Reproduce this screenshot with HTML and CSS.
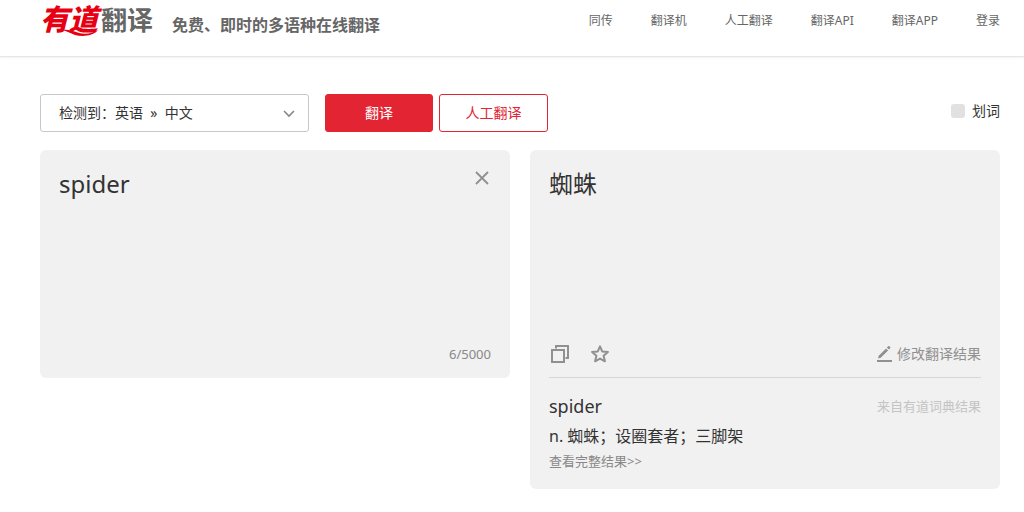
FILE: index.html
```html
<!DOCTYPE html>
<html lang="zh-CN">
<head>
<meta charset="utf-8">
<meta name="viewport" content="width=device-width, initial-scale=1">
<title>有道翻译</title>
<link rel="stylesheet" href="styles.css">
</head>
<body>
<header class="header">
  <h1 class="logo">
    <span class="logo-mark">有道<svg class="logo-swoosh" viewBox="0 0 60 14" aria-hidden="true"><path d="M22 6C28 5 33 7 39 9C46 11 53 9 58 6C53 12 43 13 35 11C30 9 27 7 22 6Z"/></svg></span>
    <span class="logo-name">翻译</span>
  </h1>
  <p class="tagline">免费、即时的多语种在线翻译</p>
  <nav class="nav">
    <a href="#">同传</a>
    <a href="#">翻译机</a>
    <a href="#">人工翻译</a>
    <a href="#">翻译API</a>
    <a href="#">翻译APP</a>
    <a href="#">登录</a>
  </nav>
</header>
<main class="main">
  <form class="toolbar">
    <div class="language">
      <select class="language-select" aria-label="翻译语言">
        <option>检测到：英语&nbsp; »&nbsp; 中文</option>
      </select>
      <svg class="language-arrow" viewBox="0 0 12 8" aria-hidden="true"><path d="M1 1L6 6L11 1"/></svg>
    </div>
    <div class="actions">
      <button class="button button-primary" type="button">翻译</button>
      <button class="button" type="button">人工翻译</button>
    </div>
    <label class="pick"><input class="pick-box" type="checkbox">划词</label>
  </form>
  <div class="panels">
    <section class="panel source">
      <div class="source-row">
        <textarea class="source-text" aria-label="原文" spellcheck="false">spider</textarea>
        <button class="icon-button" type="button" aria-label="清空">
          <svg class="icon-close" viewBox="0 0 14 14"><path d="M1 1L13 13M13 1L1 13"/></svg>
        </button>
      </div>
      <p class="counter">6/5000</p>
    </section>
    <section class="panel">
      <p class="result">蜘蛛</p>
      <div class="tools">
        <button class="icon-button" type="button" aria-label="复制">
          <svg class="icon" viewBox="0 0 18 18"><path d="M1 5H13V17H1ZM5 3.5V1H17V13H14.5"/></svg>
        </button>
        <button class="icon-button" type="button" aria-label="收藏">
          <svg class="icon icon-star" viewBox="0 0 18 18"><path d="M9 1.4L11.2 6.4L16.9 6.9L12.6 10.7L13.9 16.3L9 13.6L4.1 16.3L5.4 10.7L1.1 6.9L6.8 6.4Z"/></svg>
        </button>
        <button class="icon-button edit" type="button">
          <svg class="icon-pen" viewBox="0 0 16 18"><path d="M0 15H15V17H0ZM1 13.5L1.7 10.8L9.1 3.4L11.1 5.4L3.7 12.8ZM9.9 2.6L11.2 1.3Q11.9 .8 12.5 1.3L13.2 2Q13.7 2.6 13.2 3.3L11.9 4.6Z"/></svg>
          修改翻译结果
        </button>
      </div>
      <div class="dictionary">
        <div class="entry">
          <h2 class="word">spider</h2>
          <span class="origin">来自有道词典结果</span>
        </div>
        <p class="meaning">n. 蜘蛛；设圈套者；三脚架</p>
        <a class="more" href="#">查看完整结果&gt;&gt;</a>
      </div>
    </section>
  </div>
</main>
</body>
</html>
```
FILE: styles.css
```css
* {
  box-sizing: border-box;
}

body {
  margin: 0;
  background: #fff;
  color: #333;
  font: 14px/20px "Noto Sans", "Noto Sans CJK SC", sans-serif;
}

h1, h2, p {
  margin: 0;
  font-weight: 400;
}

a {
  color: inherit;
  text-decoration: none;
}

button, select, textarea {
  margin: 0;
  padding: 0;
  border: 0;
  background: none;
  color: inherit;
  font: inherit;
}

.header {
  display: flex;
  align-items: flex-start;
  height: 57px;
  padding: 0 24px 0 40px;
  border-bottom: 1px solid #e6e6e6;
  box-shadow: 0 1px 2px #f2f2f2;
}

.logo {
  display: flex;
  gap: 3px;
  line-height: 40px;
}

.logo-mark {
  position: relative;
  color: #e60012;
  font-size: 29px;
  font-style: italic;
  font-weight: 900;
  line-height: 38px;
}

.logo-swoosh {
  position: absolute;
  left: 0;
  bottom: 2px;
  width: 60px;
  height: 14px;
  fill: #e60012;
}

.logo-name {
  color: #666;
  font-size: 26px;
  font-weight: 600;
}

.tagline {
  margin-left: 19px;
  padding-top: 15px;
  color: #666;
  font-size: 16px;
  font-weight: 600;
}

.nav {
  display: flex;
  gap: 38px;
  margin-left: auto;
  padding-top: 11px;
  color: #666;
  font-size: 12px;
}

.main {
  padding: 37px 24px 23px 40px;
}

.toolbar {
  display: flex;
  align-items: center;
  gap: 16px;
}

.language {
  position: relative;
  width: 269px;
}

.language-select {
  width: 100%;
  height: 38px;
  padding: 0 32px 0 18px;
  border: 1px solid #c8c8c8;
  border-radius: 3px;
  appearance: none;
}

.language-arrow {
  position: absolute;
  top: 16px;
  right: 14px;
  width: 12px;
  height: 8px;
  fill: none;
  stroke: #888;
  stroke-width: 1.6;
  pointer-events: none;
}

.actions {
  display: flex;
  gap: 6px;
}

.button {
  width: 109px;
  height: 38px;
  border: 1px solid #e22433;
  border-radius: 3px;
  color: #e22433;
}

.button-primary {
  width: 108px;
  background: #e22433;
  color: #fff;
}

.pick {
  display: flex;
  align-items: center;
  gap: 7px;
  margin-left: auto;
  padding-bottom: 4px;
}

.pick-box {
  width: 14px;
  height: 14px;
  margin: 0;
  border-radius: 3px;
  background: #e1e1e1;
  appearance: none;
}

.pick-box:checked {
  background: #e22433;
}

.panels {
  display: grid;
  grid-template-columns: 1fr 1fr;
  align-items: start;
  gap: 20px;
  margin-top: 18px;
}

.panel {
  padding: 18px 19px;
  border-radius: 6px;
  background: #f1f1f1;
}

.source {
  padding-bottom: 14px;
}

.source-row {
  display: flex;
  align-items: flex-start;
}

.source-text {
  flex: 1;
  min-width: 0;
  height: 176px;
  outline: 0;
  font-size: 24px;
  line-height: 32px;
  resize: none;
}

.icon-button {
  display: flex;
  align-items: center;
  color: #909090;
  cursor: pointer;
}

.icon-close {
  width: 14px;
  height: 14px;
  margin: 3px 2px;
  fill: none;
  stroke: currentColor;
  stroke-width: 1.8;
}

.counter {
  color: #888;
  font-size: 13px;
  text-align: right;
}

.result {
  min-height: 176px;
  font-size: 24px;
  line-height: 32px;
}

.tools {
  display: flex;
  align-items: center;
  gap: 22px;
  padding: 0 2px 13px;
  border-bottom: 1px solid #d6d6d6;
}

.icon {
  width: 18px;
  height: 18px;
  fill: none;
  stroke: currentColor;
  stroke-width: 2;
}

.icon-star {
  stroke-linejoin: round;
}

.edit {
  gap: 4px;
  margin-right: -2px;
  margin-left: auto;
}

.icon-pen {
  width: 16px;
  height: 18px;
  fill: currentColor;
}

.dictionary {
  padding-top: 13px;
}

.entry {
  display: flex;
  align-items: center;
  justify-content: space-between;
}

.word {
  font-size: 18px;
  line-height: 30px;
}

.origin {
  color: #c4c4c4;
  font-size: 13px;
}

.meaning {
  font-size: 16px;
  line-height: 30px;
}

.more {
  display: block;
  color: #888;
  font-size: 13px;
}
```
